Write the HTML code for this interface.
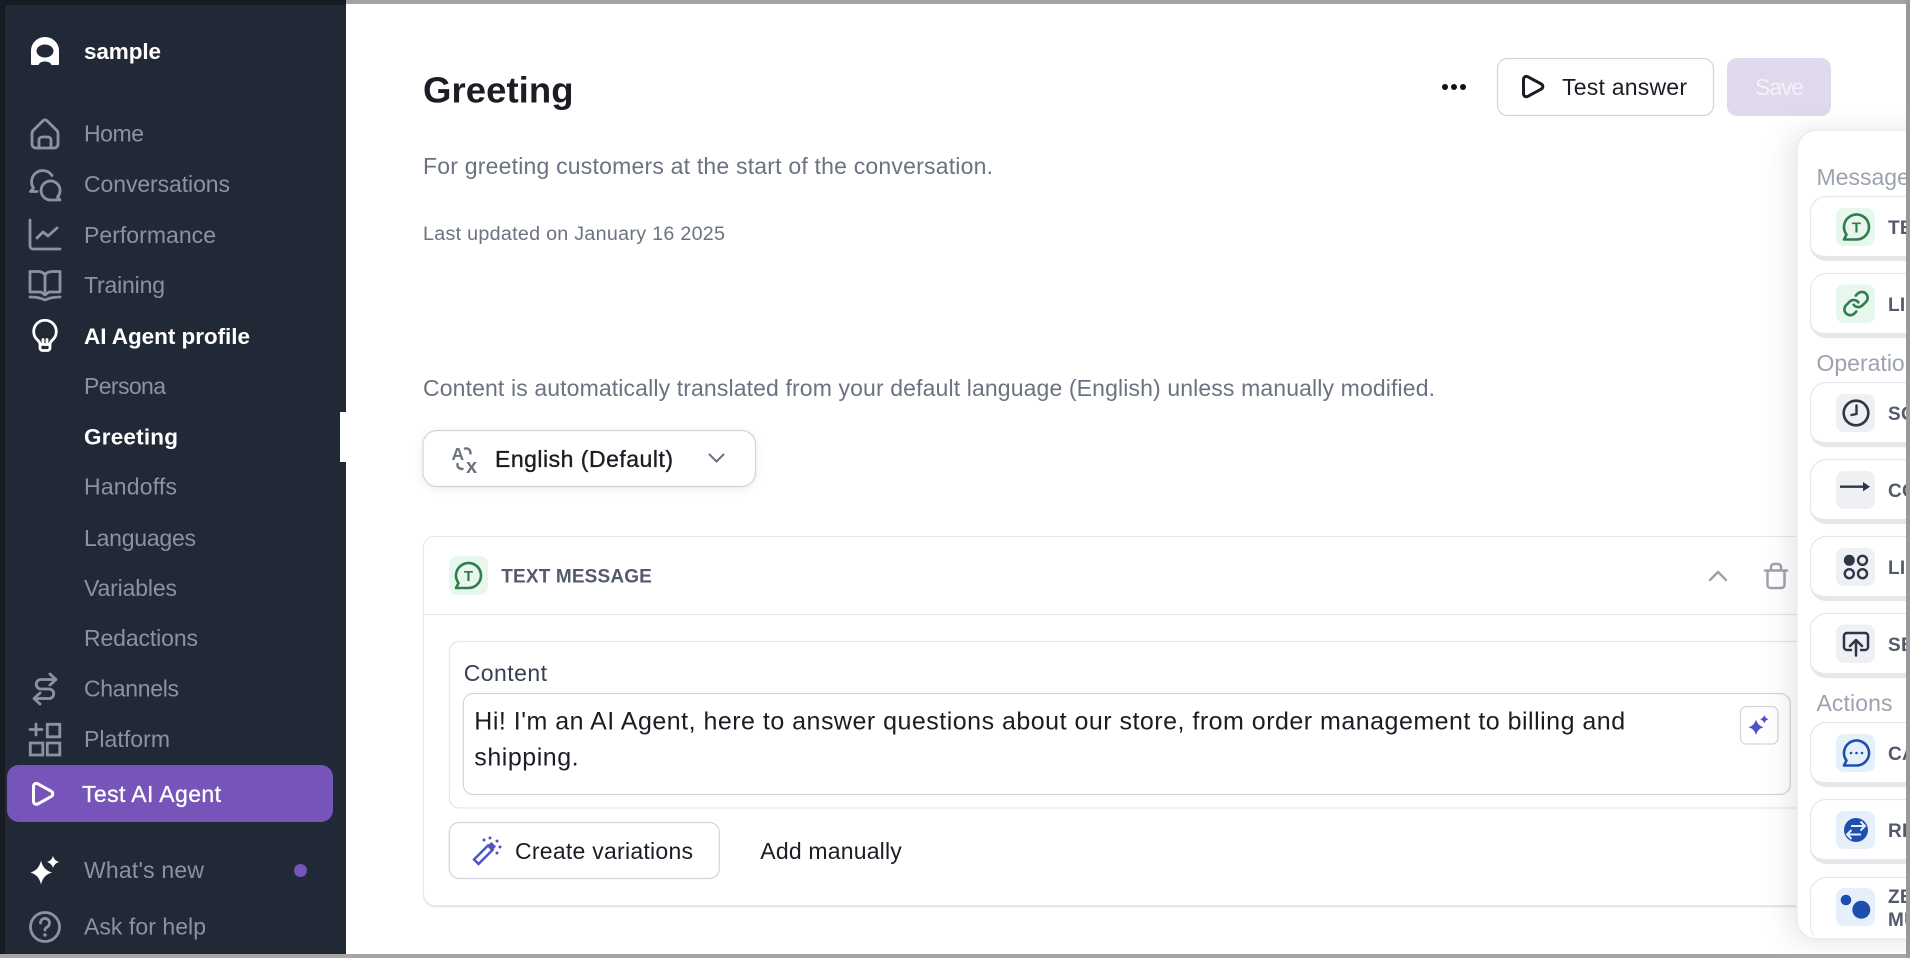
<!DOCTYPE html>
<html lang="en">
<head>
<meta charset="utf-8">
<title>Greeting</title>
<style>
html,body{margin:0;padding:0;width:1910px;height:958px;overflow:hidden;background:#fff}
svg{display:block;position:absolute;left:0;top:0}
text{font-family:"Liberation Sans",sans-serif;font-size:23px}
.nav{fill:#8b92a2}
.w{fill:#fff;font-weight:700;font-size:22.5px}
.dk{fill:#1a1d23}
.gr{fill:#6b7280}
.lab{fill:#9ca3af}
.cd{fill:#525a6b;font-weight:700;font-size:19px;letter-spacing:.3px}
.st{fill:none;stroke:#8b92a2;stroke-width:2.8;stroke-linecap:round;stroke-linejoin:round}
.card{fill:#fff;stroke:#e5e7eb;stroke-width:1.2}
</style>
</head>
<body>
<svg width="1910" height="958" viewBox="0 0 1910 958" xmlns="http://www.w3.org/2000/svg">
<defs>
<clipPath id="cl"><rect x="1797" y="130" width="113" height="805"/></clipPath>
</defs>
<rect width="1910" height="958" fill="#fff"/>

<!-- main content -->
<text x="423" y="102.5" textLength="150.500" style="font-size:36.5px;font-weight:700" class="dk">Greeting</text>
<text x="423" y="174" textLength="570" class="gr">For greeting customers at the start of the conversation.</text>
<text x="423" y="240" textLength="302" style="font-size:19.7px" class="gr">Last updated on January 16 2025</text>
<text x="423" y="395.9" textLength="1012" class="gr">Content is automatically translated from your default language (English) unless manually modified.</text>

<!-- top actions -->
<circle cx="1445" cy="87" r="3" fill="#111"/><circle cx="1454" cy="87" r="3" fill="#111"/><circle cx="1463" cy="87" r="3" fill="#111"/>
<rect x="1497.5" y="58.5" width="216" height="57" rx="10" fill="#fff" stroke="#d1d5db" stroke-width="1.2"/>
<path d="M1523.5 79.500c0-2.500 2.200-3.800 4.400-2.700l13.400 7.200c2 1.100 2 4 0 5.100l-13.400 7.200c-2.200 1.100-4.400-.2-4.400-2.700z" fill="none" stroke="#1a1d23" stroke-width="3" stroke-linejoin="round"/>
<text x="1562" y="95" textLength="125" class="dk">Test answer</text>
<rect x="1727" y="58" width="104" height="58" rx="10" fill="#e0d9ee"/>
<text x="1755" y="95" textLength="49" fill="#f3f0f8">Save</text>

<!-- language dropdown -->
<rect x="423" y="430.500" width="332.500" height="56" rx="14" fill="#fff" stroke="#d1d5db" stroke-width="1.2" style="filter:drop-shadow(0 2px 4px rgba(0,0,0,.08))"/>
<text x="451.500" y="460" style="font-size:17.500px;font-weight:700" fill="#6b7280">A</text>
<text x="466" y="473" style="font-size:20px;font-weight:700" fill="#6b7280">x</text>
<path d="M465 448.500c3-.5 5.500 1 5.500 5M457.500 464c-.5 3 1.500 5 5 5" fill="none" stroke="#6b7280" stroke-width="2.400" stroke-linecap="round"/>
<text x="495" y="466.900" textLength="178" class="dk" stroke="#1a1d23" stroke-width=".35">English (Default)</text>
<path d="M709.500 454.500l7 7 7-7" fill="none" stroke="#6b7280" stroke-width="2" stroke-linecap="round" stroke-linejoin="round"/>

<!-- message card -->
<rect x="423" y="536" width="1500" height="371.500" rx="12" fill="#e5e7eb"/>
<rect x="424" y="537" width="1498" height="368" rx="11" fill="#fff"/>
<path d="M424 614.500H1800" stroke="#e5e7eb" stroke-width="1.200"/>
<rect x="449" y="556" width="39" height="39" rx="8" fill="#e8f7ee"/>
<path d="M456 588h12.500a12.500 12.500 0 1 0-10-5z" fill="none" stroke="#2f7d4a" stroke-width="2.600" stroke-linejoin="round"/>
<text x="468.500" y="581" text-anchor="middle" style="font-size:15px;font-weight:700" fill="#2f7d4a">T</text>
<text x="501.300" y="582.700" textLength="150.500" class="cd" style="letter-spacing:0">TEXT MESSAGE</text>
<path d="M1710 580l8-8 8 8" fill="none" stroke="#9ca3af" stroke-width="2.500" stroke-linecap="round" stroke-linejoin="round"/>
<g fill="none" stroke="#9ca3af" stroke-width="2.500" stroke-linecap="round" stroke-linejoin="round">
<path d="M1765 570.500h22"/><path d="M1771 570v-3a3 3 0 0 1 3-3h4a3 3 0 0 1 3 3v3"/><path d="M1767.500 571v14a3 3 0 0 0 3 3h11a3 3 0 0 0 3-3v-14"/>
</g>

<rect x="449.300" y="641.500" width="1400" height="166.500" rx="10" fill="#fff" stroke="#e5e7eb" stroke-width="1.200"/>
<text x="463.700" y="681" textLength="83.300" fill="#374151">Content</text>
<rect x="463.300" y="693.500" width="1327" height="101" rx="10" fill="#fff" stroke="#d1d5db" stroke-width="1.200"/>
<text x="474.300" y="729.300" textLength="1150.800" style="font-size:25px" class="dk">Hi! I'm an AI Agent, here to answer questions about our store, from order management to billing and</text>
<text x="474.300" y="765.700" textLength="104.300" style="font-size:25px" class="dk">shipping.</text>
<rect x="1740.500" y="706.500" width="37.500" height="37.500" rx="6" fill="#fff" stroke="#d1d5db" stroke-width="1.200"/>
<path d="M1756 719.500Q1757.500 725.500 1763.500 727.300Q1757.500 729 1756 735Q1754.500 729 1748.500 727.300Q1754.500 725.500 1756 719.500zM1764.300 715Q1765.300 718.300 1768.500 719.300Q1765.300 720.300 1764.300 723.500Q1763.300 720.300 1760 719.300Q1763.300 718.300 1764.300 715z" fill="#4f52c9"/>

<rect x="449.300" y="822.500" width="270" height="56" rx="10" fill="#fff" stroke="#d1d5db" stroke-width="1.200"/>
<path d="M474 859.500l14-14 4.500 4.500-14 14z" fill="none" stroke="#4f52c9" stroke-width="2.400"/>
<path d="M488 845l3.500-3 4.500 4.500-3 3.500z" fill="#4f52c9"/>
<g fill="#4f52c9"><circle cx="484" cy="840" r="1.500"/><circle cx="490" cy="838" r="1.500"/><circle cx="497" cy="841" r="1.500"/><circle cx="500" cy="847" r="1.500"/><circle cx="497" cy="853" r="1.500"/></g>
<text x="515" y="859" textLength="178" class="dk">Create variations</text>
<text x="760.300" y="859" textLength="141.500" class="dk">Add manually</text>

<!-- right panel -->
<rect x="1797" y="130" width="160" height="809" rx="20" fill="#fff" stroke="#e8e9ec" stroke-width="1.200" style="filter:drop-shadow(-6px 2px 14px rgba(0,0,0,.10))"/>
<g clip-path="url(#cl)">
<text x="1816.500" y="185" class="lab">Messages</text>
<text x="1816.500" y="371" class="lab">Operations</text>
<text x="1816.500" y="711" textLength="76" class="lab">Actions</text>
<g>
<rect class="card" x="1810.500" y="196.500" width="140" height="64" rx="16"/><path d="M1811 244c0 10 6 16.500 16 16.500h120v-4.500h-120c-10 0-16-4-16-12z" fill="#e5e7eb"/>
<rect class="card" x="1810.500" y="273.500" width="140" height="64" rx="16"/><path d="M1811 321c0 10 6 16.500 16 16.500h120v-4.500h-120c-10 0-16-4-16-12z" fill="#e5e7eb"/>
<rect class="card" x="1810.500" y="382.500" width="140" height="64" rx="16"/><path d="M1811 430c0 10 6 16.500 16 16.500h120v-4.500h-120c-10 0-16-4-16-12z" fill="#e5e7eb"/>
<rect class="card" x="1810.500" y="459.500" width="140" height="64" rx="16"/><path d="M1811 507c0 10 6 16.500 16 16.500h120v-4.500h-120c-10 0-16-4-16-12z" fill="#e5e7eb"/>
<rect class="card" x="1810.500" y="536.500" width="140" height="64" rx="16"/><path d="M1811 584c0 10 6 16.500 16 16.500h120v-4.500h-120c-10 0-16-4-16-12z" fill="#e5e7eb"/>
<rect class="card" x="1810.500" y="613.500" width="140" height="64" rx="16"/><path d="M1811 661c0 10 6 16.500 16 16.500h120v-4.500h-120c-10 0-16-4-16-12z" fill="#e5e7eb"/>
<rect class="card" x="1810.500" y="722.500" width="140" height="64" rx="16"/><path d="M1811 770c0 10 6 16.500 16 16.500h120v-4.500h-120c-10 0-16-4-16-12z" fill="#e5e7eb"/>
<rect class="card" x="1810.500" y="799.500" width="140" height="64" rx="16"/><path d="M1811 847c0 10 6 16.500 16 16.500h120v-4.500h-120c-10 0-16-4-16-12z" fill="#e5e7eb"/>
<rect class="card" x="1810.500" y="877.500" width="140" height="64" rx="16"/>
</g>
<!-- icon tiles -->
<rect x="1836" y="208" width="39" height="38" rx="8" fill="#e8f7ee"/>
<rect x="1836" y="284.500" width="39" height="38.500" rx="8" fill="#e8f7ee"/>
<rect x="1836" y="394" width="39" height="38" rx="8" fill="#eef0f4"/>
<rect x="1836" y="471" width="39" height="38" rx="8" fill="#eef0f4"/>
<rect x="1836" y="548" width="39" height="38" rx="8" fill="#eef0f4"/>
<rect x="1836" y="624.500" width="39" height="38.500" rx="8" fill="#eef0f4"/>
<rect x="1836" y="734" width="39" height="38" rx="8" fill="#e6f0fb"/>
<rect x="1836" y="811" width="39" height="38" rx="8" fill="#e6f0fb"/>
<rect x="1836" y="888" width="39" height="38" rx="8" fill="#e6f0fb"/>

<path d="M1844 239.500h12.500a12.500 12.500 0 1 0-10-5z" fill="none" stroke="#2f7d4a" stroke-width="2.600" stroke-linejoin="round"/>
<text x="1856.500" y="232.300" text-anchor="middle" style="font-size:15px;font-weight:700" fill="#2f7d4a">T</text>
<g transform="translate(1842,289.500) scale(1.170)" fill="none" stroke="#2f7d4a" stroke-width="2.200" stroke-linecap="round" stroke-linejoin="round">
<path d="M10 13a5 5 0 0 0 7.540.54l3-3a5 5 0 0 0-7.070-7.070l-1.720 1.710"/><path d="M14 11a5 5 0 0 0-7.540-.54l-3 3a5 5 0 0 0 7.070 7.070l1.710-1.710"/>
</g>
<circle cx="1856" cy="413" r="12.300" fill="none" stroke="#2d3548" stroke-width="2.600"/>
<path d="M1856.500 405.500v8.500l-5 1" fill="none" stroke="#2d3548" stroke-width="2.400" stroke-linecap="round" stroke-linejoin="round"/>
<path d="M1840 486.700h24" stroke="#2d3548" stroke-width="2.400"/>
<path d="M1863 482l7 4.700-7 4.700z" fill="#2d3548"/>
<circle cx="1849.300" cy="560.300" r="5.500" fill="#2d3548"/>
<g fill="none" stroke="#2d3548" stroke-width="2.400">
<circle cx="1862.500" cy="560.300" r="4.500"/><circle cx="1849.300" cy="573.700" r="4.500"/><circle cx="1862.500" cy="573.700" r="4.500"/>
</g>
<path d="M1851 650h-4a3 3 0 0 1-3-3v-11a3 3 0 0 1 3-3h18a3 3 0 0 1 3 3v11a3 3 0 0 1-3 3h-4M1856 655.500v-15M1850 646l6-6 6 6" fill="none" stroke="#2d3548" stroke-width="2.500" stroke-linecap="round" stroke-linejoin="round"/>
<path d="M1844 765.500h12.500a12.500 12.500 0 1 0-10-5z" fill="none" stroke="#1e4fae" stroke-width="2.600" stroke-linejoin="round"/>
<g fill="#1e4fae"><circle cx="1851" cy="753" r="1.300"/><circle cx="1856.500" cy="753" r="1.300"/><circle cx="1862" cy="753" r="1.300"/></g>
<circle cx="1856" cy="830" r="12" fill="#1e4fae"/>
<path d="M1851 826h14M1860.500 821.500l4.500 4.500-4.500 4.500M1847 834.500h14M1851.500 830l-4.500 4.500 4.500 4.500" fill="none" stroke="#e6f0fb" stroke-width="2" stroke-linecap="butt"/>
<circle cx="1846" cy="900" r="5.300" fill="#1e4fae"/>
<circle cx="1861.300" cy="909.700" r="9" fill="#1e4fae"/>

<text x="1888" y="234" class="cd">TEXT</text>
<text x="1888" y="311" class="cd">LINK</text>
<text x="1888" y="420" class="cd">SCHEDULE</text>
<text x="1888" y="497" class="cd">CONDITION</text>
<text x="1888" y="574" class="cd">LIST</text>
<text x="1888" y="651" class="cd">SEND</text>
<text x="1888" y="760" class="cd">CALL</text>
<text x="1888" y="837" class="cd">REPLY</text>
<text x="1888" y="903" class="cd">ZENDESK</text>
<text x="1888" y="926" class="cd">MULTI</text>
</g>

<!-- sidebar -->
<rect x="0" y="0" width="346" height="954" fill="#222936"/>
<rect x="0" y="0" width="346" height="5" fill="#161b24"/>
<rect x="0" y="0" width="5" height="954" fill="#161b24"/>
<rect x="340" y="412" width="6" height="50" fill="#fff"/>

<path fill="#fff" fill-rule="evenodd" d="M31 64V50.500a14 13.500 0 0 1 28 0V64a1 1 0 0 1-1 1h-6.500c-.5-1.500-2-3.500-6.500-3.500s-6 2-6.500 3.500H32a1 1 0 0 1-1-1zM45 44.500c-4.700 0-8.500 2.900-8.500 6.500s3.800 6.500 8.500 6.500 8.500-2.900 8.500-6.500-3.800-6.500-8.500-6.500z"/>
<text x="84" y="59" textLength="77" class="w">sample</text>

<g class="st">
<path d="M32 133.500c0-1.300.5-2.500 1.500-3.400l9.500-9.400a3 3 0 0 1 4 0l9.500 9.400c1 .9 1.500 2.100 1.500 3.400V144a4 4 0 0 1-4 4H36a4 4 0 0 1-4-4z"/>
<path d="M39 148v-8a3 3 0 0 1 3-3h6a3 3 0 0 1 3 3v8"/>
<path d="M37 191.500h-6.500l3-3.500A11 11 0 1 1 52 175.500"/>
<path d="M50 200h10l-2.500-3a9.500 9.500 0 1 0-7.500 3z"/>
<path d="M30 220v26a3 3 0 0 0 3 3h27"/>
<path d="M37 238l6-6 5 4 9-8"/>
<path d="M30 271.500H38C41 271.500 45 273 45 276V294M60 271.500H52C49 271.500 45 273 45 276M30 271.500V292H41M60 271.500V292H49M41 292l4 3 4-3"/>
<path d="M30 297c5 0 10 .5 15 3 5-2.500 10-3 15-3"/>
<path d="M56 679.500H41a4.750 4.750 0 0 0 0 9.500H49a4.750 4.750 0 0 1 0 9.500H34M50 674l6 5.500-6 5.500M40 693l-6 5.500 6 5.500"/>
<path d="M30 729.500h12M36 724v11"/>
<path d="M47.300 724.300h12.500v12.500H47.300zM30.300 743h12.500v12H30.300zM47.300 743h12.500v12H47.300z" stroke-linejoin="miter"/>
<circle cx="45" cy="927" r="14.500"/>
<path d="M40.500 923a4.500 4.500 0 1 1 7 3.700c-1.500 1-2.500 1.800-2.500 3.300"/>
</g>
<circle cx="45" cy="935" r="1.700" fill="#8b92a2"/>
<path d="M40 344c-.3-1.800-1.500-3.300-3-4.500a11.300 11.300 0 1 1 16 0c-1.500 1.200-2.700 2.700-3 4.500v4a2.500 2.500 0 0 1-2.500 2.500h-5a2.500 2.500 0 0 1-2.500-2.500zM40 344.500h10M43 344v-4.500M47 344v-4.500" fill="none" stroke="#fff" stroke-width="2.800" stroke-linecap="round" stroke-linejoin="round"/>

<text x="84" y="141.700" textLength="60" class="nav">Home</text>
<text x="84" y="192" textLength="146" class="nav">Conversations</text>
<text x="84" y="243" textLength="132" class="nav">Performance</text>
<text x="84" y="293" textLength="81" class="nav">Training</text>
<text x="84" y="344" textLength="166" class="w">AI Agent profile</text>
<text x="84" y="394" textLength="82" class="nav">Persona</text>
<text x="84" y="444.700" textLength="94" class="w">Greeting</text>
<text x="84" y="494.700" textLength="93" class="nav">Handoffs</text>
<text x="84" y="546" textLength="112" class="nav">Languages</text>
<text x="84" y="596" textLength="93" class="nav">Variables</text>
<text x="84" y="646" textLength="114" class="nav">Redactions</text>
<text x="84" y="696.700" textLength="95" class="nav">Channels</text>
<text x="84" y="747" textLength="86" class="nav">Platform</text>

<rect x="7" y="765" width="326" height="57" rx="12" fill="#7654ba"/>
<path d="M33.500 786.500c0-2.500 2.200-3.800 4.400-2.700l13.400 7.500c2 1.100 2 4 0 5.100l-13.400 7.500c-2.200 1.100-4.400-.2-4.400-2.700z" fill="none" stroke="#fff" stroke-width="3" stroke-linejoin="round"/>
<text x="82" y="802" textLength="139" fill="#fff" stroke="#fff" stroke-width=".3">Test AI Agent</text>

<path d="M41 860.500Q43 870 52 872.500Q43 875 41 884.500Q39 875 30.500 872.500Q39 870 41 860.500zM53 856Q54.300 860.700 59 862Q54.300 863.300 53 868Q51.700 863.300 47 862Q51.700 860.700 53 856z" fill="#fff"/>
<text x="84" y="878" textLength="120" class="nav">What's new</text>
<circle cx="300.500" cy="870.500" r="6.500" fill="#7654ba"/>
<text x="84" y="934.700" textLength="122" class="nav">Ask for help</text>

<!-- window frame -->
<rect x="346" y="0" width="1564" height="4" fill="#a3a3a3"/>
<rect x="0" y="954" width="1910" height="4" fill="#a6a6a6"/>
<rect x="1906" y="0" width="4" height="958" fill="#999"/>
</svg>
</body>
</html>
